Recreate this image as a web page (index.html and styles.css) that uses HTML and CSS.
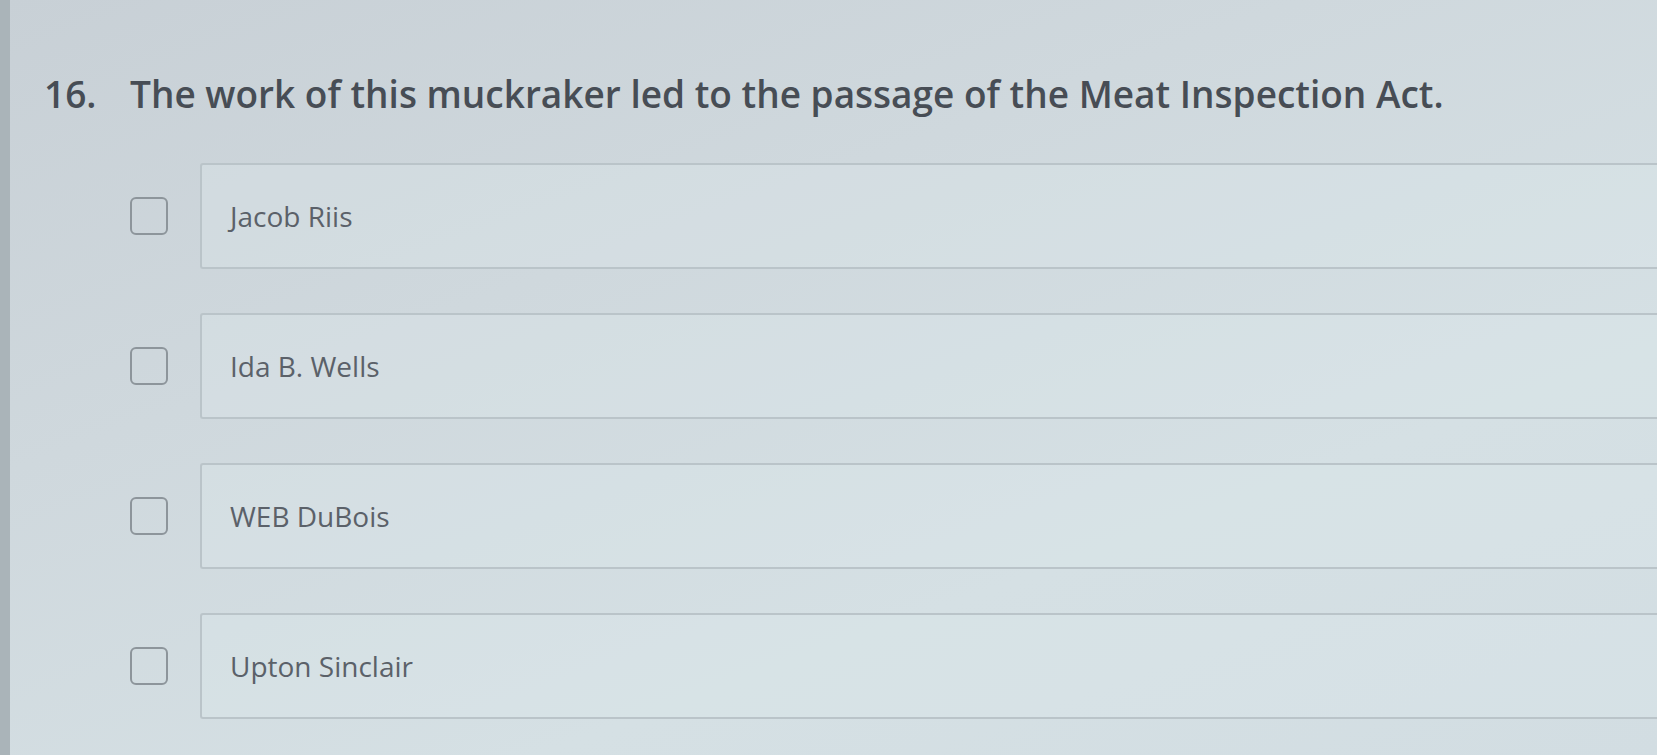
FILE: index.html
```html
<!DOCTYPE html>
<html lang="en">
<head>
<meta charset="utf-8">
<title>Question 16</title>
<link rel="stylesheet" href="styles.css">
</head>
<body>
<main class="page">
  <section class="question">
    <h2 class="question-title">
      <span class="question-number">16.</span>
      <span class="question-text">The work of this muckraker led to the passage of the Meat Inspection Act.</span>
    </h2>
    <ul class="choices">
      <li class="choice">
        <span class="checkbox"></span>
        <label class="choice-box">Jacob Riis</label>
      </li>
      <li class="choice">
        <span class="checkbox"></span>
        <label class="choice-box">Ida B. Wells</label>
      </li>
      <li class="choice">
        <span class="checkbox"></span>
        <label class="choice-box">WEB DuBois</label>
      </li>
      <li class="choice">
        <span class="checkbox"></span>
        <label class="choice-box">Upton Sinclair</label>
      </li>
    </ul>
  </section>
</main>
</body>
</html>
```

FILE: styles.css
```css
html, body {
  margin: 0;
  padding: 0;
  height: 100%;
  overflow: hidden;
}

body {
  font-family: "Open Sans", "Liberation Sans", sans-serif;
  background: linear-gradient(160deg, #c8d0d6 0%, #cfd8dd 35%, #d5e0e4 70%, #d2dde2 100%);
  color: #4b5159;
}

.page {
  height: 100%;
  border-left: 10px solid #aab4b9;
  box-sizing: border-box;
}

.question {
  padding-top: 70px;
}

.question-title {
  display: flex;
  margin: 0;
  padding-left: 34px;
  font-size: 37px;
  font-weight: 600;
  line-height: 48px;
  color: #474d55;
  letter-spacing: 0;
}

.question-number {
  width: 86px;
  flex: none;
}

.choices {
  list-style: none;
  margin: 0;
  padding: 45px 0 0 120px;
  display: flex;
  flex-direction: column;
  gap: 44px;
}

.choice {
  display: flex;
  align-items: center;
  gap: 32px;
}

.checkbox {
  flex: none;
  width: 38px;
  height: 38px;
  border: 2.5px solid #8d959b;
  border-radius: 6px;
  box-sizing: border-box;
}

.choice-box {
  flex: none;
  width: 1600px;
  height: 106px;
  display: flex;
  align-items: center;
  padding-left: 28px;
  box-sizing: border-box;
  border: 2px solid #bac4c9;
  border-right: none;
  border-radius: 3px 0 0 3px;
  background: rgba(222, 231, 235, 0.35);
  font-size: 28px;
  color: #5b6169;
  letter-spacing: 0;
}
```
